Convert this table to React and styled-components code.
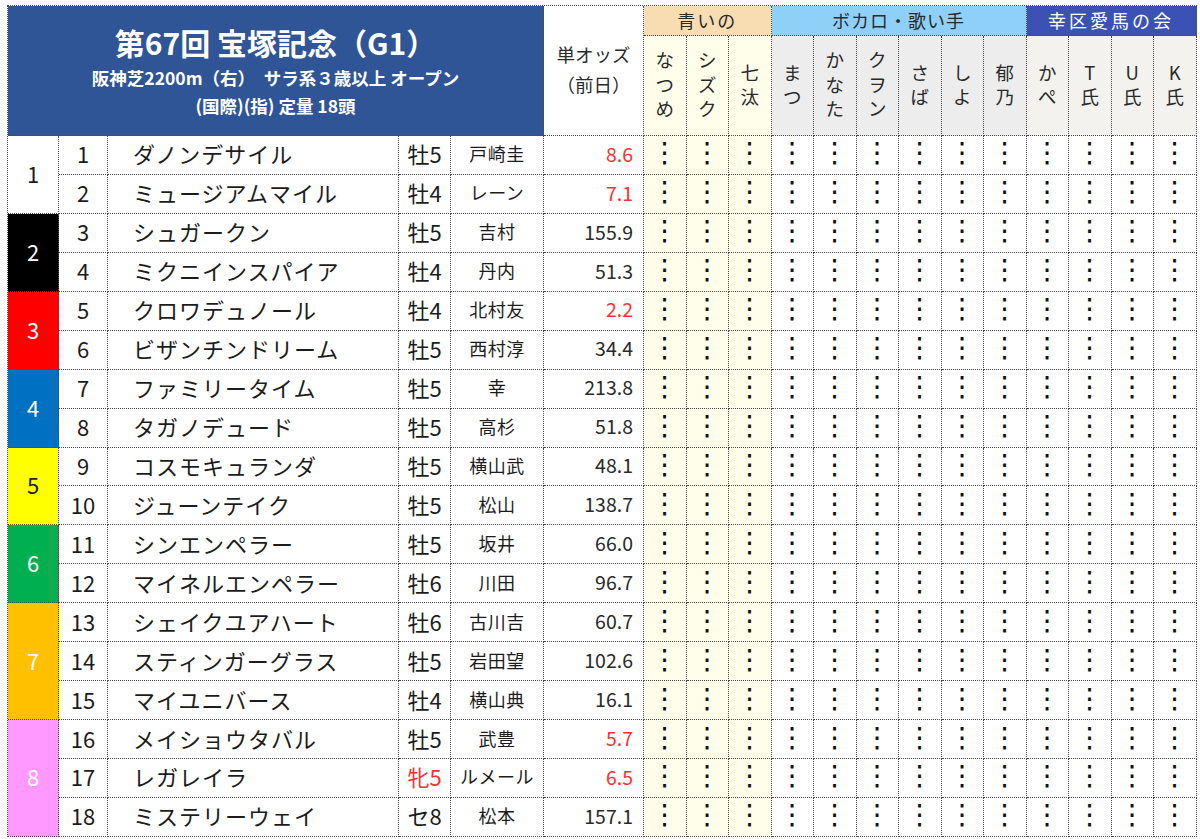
import React from "react";
import styled, { createGlobalStyle } from "styled-components";

const GlobalStyle = createGlobalStyle`
  html, body {
    margin: 0;
    padding: 0;
    background: #fff;
  }
  body {
    font-family: "Noto Sans CJK JP", "Noto Sans", sans-serif;
    color: #1c1c1c;
  }
`;

const LINE = "1px dotted #4a4a4a";

const Sheet = styled.div`
  margin: 5px 0 0 7px;
  display: grid;
  grid-template-columns: 51px 49px 291px 52px 93px 100px repeat(13, 42.5px);
  grid-template-rows: 30px 100px repeat(18, 38.95px);
  border-top: ${LINE};
  border-left: ${LINE};
  width: max-content;
`;

const Cell = styled.div`
  box-sizing: border-box;
  border-right: ${LINE};
  border-bottom: ${LINE};
  display: flex;
  align-items: center;
  justify-content: ${(p) =>
    p.$align === "left" ? "flex-start" : p.$align === "right" ? "flex-end" : "center"};
  background: ${(p) => p.$bg || "#fff"};
  color: ${(p) => p.$color || "#1c1c1c"};
  font-size: ${(p) => p.$size || 22}px;
  padding: ${(p) => p.$pad || "0 0 3px"};
  letter-spacing: ${(p) => p.$spacing || 0}px;
  white-space: nowrap;
  overflow: hidden;
  line-height: 1;
  grid-column: ${(p) => (p.$colSpan ? `span ${p.$colSpan}` : "auto")};
  grid-row: ${(p) => (p.$rowSpan ? `span ${p.$rowSpan}` : "auto")};
`;

const TitleBlock = styled(Cell)`
  flex-direction: column;
  background: #2f5597;
  color: #fff;
  font-weight: 700;
  padding: 2px 0 0;
`;

const RaceName = styled.div`
  font-size: 30px;
  line-height: 38px;
  margin-bottom: 3px;
`;

const RaceInfo = styled.div`
  font-size: 17.5px;
  line-height: 28px;
`;

const OddsHead = styled(Cell)`
  flex-direction: column;
  font-size: 18.5px;
  gap: 11px;
  color: #2a2a2a;
`;

const GroupHead = styled(Cell)`
  font-size: 18px;
  padding: 0 0 2px;
`;

const MemberHead = styled(Cell)`
  flex-direction: column;
  font-size: 18.5px;
  color: #2a2a2a;
`;

const MemberChar = styled.span`
  display: block;
  height: 24.5px;
  line-height: 24.5px;
`;

const Mark = styled(Cell)`
  font-family: "DejaVu Sans", sans-serif;
  font-size: 28px;
  color: #111;
`;

const groups = [
  { name: "青いの", bg: "#f7ddb1", color: "#2a2a2a", spacing: 2, member: "#fffeea", cols: ["なつめ", "シズク", "七汰"] },
  { name: "ボカロ・歌い手", bg: "#8fd0f9", color: "#2a2a2a", spacing: 1, member: "#ededed", cols: ["まつ", "かなた", "クヲン", "さば", "しよ", "郁乃"] },
  { name: "幸区愛馬の会", bg: "#3b52b4", color: "#fff", spacing: 3, member: "#f3f2ef", cols: ["かぺ", "T氏", "U氏", "K氏"] },
];

const members = groups.flatMap((g) =>
  g.cols.map((name) => ({ name, bg: g.member, yellow: g.name === "青いの" }))
);

const frames = {
  1: { bg: "#ffffff", color: "#1c1c1c" },
  2: { bg: "#000000", color: "#ffffff" },
  3: { bg: "#ff0000", color: "#ffffff" },
  4: { bg: "#0070c0", color: "#ffffff" },
  5: { bg: "#ffff00", color: "#1c1c1c" },
  6: { bg: "#00b050", color: "#ffffff" },
  7: { bg: "#ffc000", color: "#ffffff" },
  8: { bg: "#ff99ff", color: "#ffffff" },
};

// [枠, 馬番, 馬名, 性齢, 騎手, 単オッズ]
const horses = [
  [1, 1, "ダノンデサイル", "牡5", "戸崎圭", "8.6"],
  [1, 2, "ミュージアムマイル", "牡4", "レーン", "7.1"],
  [2, 3, "シュガークン", "牡5", "吉村", "155.9"],
  [2, 4, "ミクニインスパイア", "牡4", "丹内", "51.3"],
  [3, 5, "クロワデュノール", "牡4", "北村友", "2.2"],
  [3, 6, "ビザンチンドリーム", "牡5", "西村淳", "34.4"],
  [4, 7, "ファミリータイム", "牡5", "幸", "213.8"],
  [4, 8, "タガノデュード", "牡5", "高杉", "51.8"],
  [5, 9, "コスモキュランダ", "牡5", "横山武", "48.1"],
  [5, 10, "ジューンテイク", "牡5", "松山", "138.7"],
  [6, 11, "シンエンペラー", "牡5", "坂井", "66.0"],
  [6, 12, "マイネルエンペラー", "牡6", "川田", "96.7"],
  [7, 13, "シェイクユアハート", "牡6", "古川吉", "60.7"],
  [7, 14, "スティンガーグラス", "牡5", "岩田望", "102.6"],
  [7, 15, "マイユニバース", "牡4", "横山典", "16.1"],
  [8, 16, "メイショウタバル", "牡5", "武豊", "5.7"],
  [8, 17, "レガレイラ", "牝5", "ルメール", "6.5"],
  [8, 18, "ミステリーウェイ", "セ8", "松本", "157.1"],
];

const RED = "#ff2f2f";

const App = () => {
  return (
    <>
      <GlobalStyle />
      <Sheet>
        {/** Race title */}
        <TitleBlock $colSpan={5} $rowSpan={2}>
          <RaceName>第67回 宝塚記念（G1）</RaceName>
          <RaceInfo>阪神芝2200m（右）　サラ系３歳以上 オープン</RaceInfo>
          <RaceInfo>(国際)(指) 定量 18頭</RaceInfo>
        </TitleBlock>
        <OddsHead $rowSpan={2}>
          <span>単オッズ</span>
          <span>（前日）</span>
        </OddsHead>

        {/** Predictor groups */}
        {groups.map((g) => (
          <GroupHead
            key={g.name}
            $colSpan={g.cols.length}
            $bg={g.bg}
            $color={g.color}
            $spacing={g.spacing}
          >
            {g.name}
          </GroupHead>
        ))}
        {members.map((m) => (
          <MemberHead key={m.name} $bg={m.bg}>
            {[...m.name].map((ch, i) => (
              <MemberChar key={i}>{ch}</MemberChar>
            ))}
          </MemberHead>
        ))}

        {/** Horses */}
        {horses.map(([frame, num, name, sex, jockey, odds], idx) => {
          const first = idx === 0 || horses[idx - 1][0] !== frame;
          const span = horses.filter((h) => h[0] === frame).length;
          const red = parseFloat(odds) < 10;
          return (
            <React.Fragment key={num}>
              {first && (
                <Cell $rowSpan={span} $bg={frames[frame].bg} $color={frames[frame].color}>
                  {frame}
                </Cell>
              )}
              <Cell>{num}</Cell>
              <Cell $align="left" $pad="0 0 3px 25px" $spacing={1}>
                {name}
              </Cell>
              <Cell $color={sex === "牝5" ? RED : undefined}>{sex}</Cell>
              <Cell $size={18} $spacing={0.5}>
                {jockey}
              </Cell>
              <Cell $align="right" $pad="0 10px 3px 0" $size={19.5} $color={red ? RED : "#2a2a2a"}>
                {odds}
              </Cell>
              {members.map((m) => (
                <Mark key={m.name} $bg={m.yellow ? "#fffeea" : "#fff"}>
                  ⋮
                </Mark>
              ))}
            </React.Fragment>
          );
        })}
      </Sheet>
    </>
  );
};

export default App;
